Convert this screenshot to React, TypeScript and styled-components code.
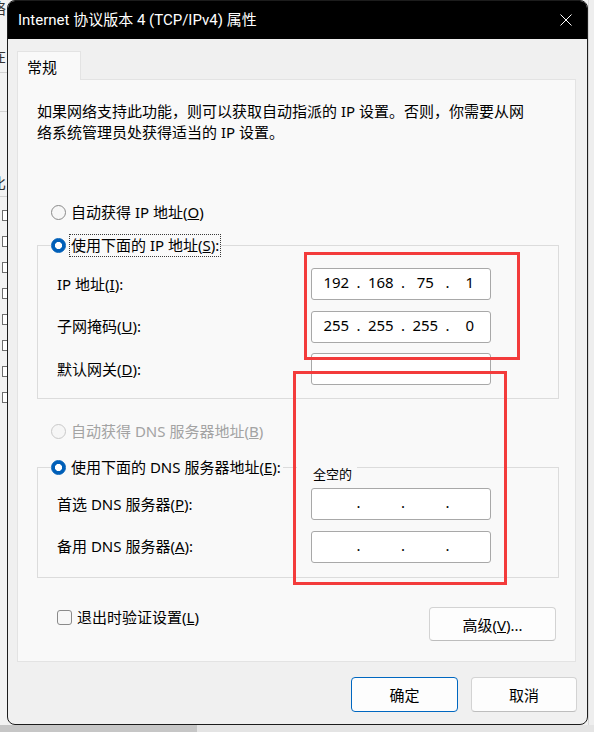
import React from "react";
import styled, { createGlobalStyle } from "styled-components";

const FONT = `"Noto Sans", "Noto Sans CJK SC", sans-serif`;
const TITLE_FONT = `Roboto, "Noto Sans CJK SC", sans-serif`;

const Global = createGlobalStyle`
  html, body { margin: 0; padding: 0; }
  body { width: 594px; height: 732px; overflow: hidden; background: #e6e6e6; }
`;

const Screen = styled.div`
  position: relative;
  width: 594px;
  height: 732px;
  display: grid;
  grid-template-columns: 7px 581px 6px;
  grid-template-rows: 725px 7px;
  font-family: ${FONT};
  background: #f0f0f0;
  overflow: hidden;
`;

const LeftStrip = styled.div`
  background: #f2f2f2;
  display: flex;
  flex-direction: column;
  align-items: flex-start;
  overflow: hidden;
`;

const FragText = styled.span<{ $top: number; $color?: string }>`
  display: block;
  width: 16px;
  margin: ${(p) => p.$top}px 0 0 -9px;
  font-family: "Noto Sans CJK SC", sans-serif;
  font-size: 15px;
  line-height: 20px;
  color: ${(p) => p.$color ?? "#333"};
  white-space: nowrap;
`;

const FragRule = styled.span<{ $top: number }>`
  display: block;
  width: 7px;
  height: 1px;
  margin-top: ${(p) => p.$top}px;
  background: #d2d2d2;
`;

const FragBoxes = styled.div`
  display: flex;
  flex-direction: column;
  gap: 15px;
  margin-top: 13px;
  padding-left: 2px;
`;

const Frag = styled.span`
  display: block;
  width: 5px;
  height: 11px;
  box-sizing: border-box;
  border: 1px solid #6e6e6e;
  border-right: none;
  background: #fff;
`;

const RightStrip = styled.div`
  background: #eeeeee;
  border-left: 1px solid #d6d6d6;
`;

const BottomStrip = styled.div`
  grid-column: 1 / 4;
  background: linear-gradient(to right, #c6c6c6 0 197px, #e4e4e4 197px);
`;

const Dialog = styled.div`
  display: flex;
  flex-direction: column;
  background: #f0f0f0;
  border: 1px solid #1c1c1c;
  border-radius: 8px;
  overflow: hidden;
`;

const TitleBar = styled.div`
  height: 38px;
  flex: none;
  background: #000;
  color: #fff;
  display: flex;
  align-items: center;
  justify-content: space-between;
  padding: 0 15px 0 10px;
  font-family: ${TITLE_FONT};
  font-size: 15px;
  line-height: 20px;
`;

const Body = styled.div`
  display: flex;
  flex-direction: column;
  padding: 12px 11px 0 9px;
`;

const TabStrip = styled.div`
  display: flex;
`;

const Tab = styled.div`
  height: 29px;
  box-sizing: border-box;
  padding: 0 23px 0 9px;
  display: flex;
  align-items: center;
  background: #f9f9f9;
  border: 1px solid #e3e3e3;
  border-bottom: none;
  margin-bottom: -1px;
  position: relative;
  z-index: 1;
  font-size: 15px;
  color: #000;
`;

const Panel = styled.div`
  height: 583px;
  box-sizing: border-box;
  background: #f9f9f9;
  border: 1px solid #e3e3e3;
  display: flex;
  flex-direction: column;
`;

const Desc = styled.div`
  margin: 21px 0 0 19px;
  font-size: 15px;
  line-height: 21px;
  color: #000;
`;

const DescLine = styled.div`
  white-space: nowrap;
`;

const OptionRow = styled.div<{ $top?: number; $left?: number }>`
  display: flex;
  align-items: center;
  height: 23px;
  margin-top: ${(p) => p.$top ?? 0}px;
  margin-left: ${(p) => p.$left ?? 0}px;
`;

const RadioDot = styled.span<{ $checked?: boolean; $disabled?: boolean }>`
  width: 15px;
  height: 15px;
  flex: none;
  box-sizing: border-box;
  border-radius: 50%;
  border: 1px solid
    ${(p) => (p.$disabled ? "#c9c9c9" : p.$checked ? "#005fb8" : "#8a8a8a")};
  background: ${(p) =>
    p.$checked
      ? "radial-gradient(circle, #fff 0 3.2px, #005fb8 3.9px)"
      : p.$disabled
      ? "#f6f6f6"
      : "#f7f7f7"};
`;

const OptionText = styled.span<{ $focus?: boolean; $disabled?: boolean }>`
  margin-left: 3px;
  padding: 0 1px;
  border: 1px dotted ${(p) => (p.$focus ? "#3a3a3a" : "transparent")};
  font-size: 15px;
  line-height: 21px;
  white-space: nowrap;
  color: ${(p) => (p.$disabled ? "#a3a3a3" : "#000")};
`;

const Group = styled.fieldset<{ $top: number; $bottom: number }>`
  margin: ${(p) => p.$top}px 16px 0 19px;
  padding: 0 0 ${(p) => p.$bottom}px 0;
  border: 1px solid #dcdcdc;
  min-width: 0;
`;

const Legend = styled.legend`
  margin-left: 13px;
  padding: 0;
`;

const FieldGrid = styled.div<{ $top: number }>`
  display: grid;
  grid-template-columns: 254px 180px;
  row-gap: 10.5px;
  align-items: center;
  padding: ${(p) => p.$top}px 0 0 19px;
`;

const FieldLabel = styled.span`
  font-size: 15px;
  line-height: 21px;
  color: #000;
  white-space: nowrap;
`;

const IpBox = styled.div`
  width: 180px;
  height: 32px;
  box-sizing: border-box;
  background: #fff;
  border: 1px solid #a8a8a8;
  border-radius: 3px;
  display: grid;
  grid-template-columns: 1fr 4px 1fr 4px 1fr 4px 1fr;
  padding-left: 4px;
  font-size: 15px;
  line-height: 26px;
  color: #000;
`;

const IpCell = styled.span`
  text-align: center;
`;

const IpDot = styled.span`
  display: flex;
  justify-content: center;
`;

const BottomRow = styled.div`
  margin: 29px 19px 0 39px;
  display: flex;
  align-items: flex-start;
  justify-content: space-between;
`;

const CheckLabel = styled.label`
  display: flex;
  align-items: center;
  gap: 5px;
  height: 21px;
  font-size: 15px;
  line-height: 21px;
  color: #000;
  white-space: nowrap;
`;

const CheckBox = styled.span`
  width: 15px;
  height: 15px;
  flex: none;
  box-sizing: border-box;
  border: 1px solid #8a8a8a;
  border-radius: 3px;
  background: #f7f7f7;
`;

const PushButton = styled.button<{ $primary?: boolean; $w: number; $h: number }>`
  width: ${(p) => p.$w}px;
  height: ${(p) => p.$h}px;
  box-sizing: border-box;
  padding: 0;
  background: #fdfdfd;
  border: 1px solid ${(p) => (p.$primary ? "#0067c0" : "#d3d3d3")};
  border-bottom-color: ${(p) => (p.$primary ? "#0067c0" : "#bdbdbd")};
  border-radius: 4px;
  font-family: ${FONT};
  font-size: 15px;
  color: #000;
`;

const Footer = styled.div`
  margin: 15px -1px 0 0;
  display: flex;
  justify-content: flex-end;
  gap: 13px;
`;

const RedFrame = styled.div<{ $l: number; $t: number; $w: number; $h: number }>`
  position: absolute;
  left: ${(p) => p.$l}px;
  top: ${(p) => p.$t}px;
  width: ${(p) => p.$w}px;
  height: ${(p) => p.$h}px;
  box-sizing: border-box;
  border: 3px solid #f33b3b;
  pointer-events: none;
`;

const Note = styled.div`
  position: absolute;
  left: 297px;
  top: 466px;
  padding: 0 5px 0 16px;
  background: #f9f9f9;
  font-family: "Noto Sans CJK SC", sans-serif;
  font-size: 13px;
  line-height: 15px;
  color: #000;
`;

const Ip: React.FC<{ parts?: string[] }> = ({ parts = ["", "", "", ""] }) => (
  <IpBox>
    <IpCell>{parts[0]}</IpCell>
    <IpDot>.</IpDot>
    <IpCell>{parts[1]}</IpCell>
    <IpDot>.</IpDot>
    <IpCell>{parts[2]}</IpCell>
    <IpDot>.</IpDot>
    <IpCell>{parts[3]}</IpCell>
  </IpBox>
);

const CloseIcon = () => (
  <svg width="12" height="12" viewBox="0 0 12 12">
    <path d="M0.5 0.5 L11.5 11.5 M11.5 0.5 L0.5 11.5" stroke="#fff" strokeWidth="1" fill="none" />
  </svg>
);

export default function App() {
  return (
    <>
      <Global />
      <Screen>
        <LeftStrip>
          <FragText $top={-2}>络</FragText>
          <FragText $top={28}>在</FragText>
          <FragRule $top={6} />
          <FragText $top={4} $color="#2a6fb8">I</FragText>
          <FragRule $top={14} />
          <FragText $top={61}>比</FragText>
          <FragRule $top={3} />
          <FragBoxes>
            {Array.from({ length: 8 }).map((_, i) => (
              <Frag key={i} />
            ))}
          </FragBoxes>
        </LeftStrip>
        <Dialog>
          <TitleBar>
            <span>Internet 协议版本 4 (TCP/IPv4) 属性</span>
            <CloseIcon />
          </TitleBar>
          <Body>
            <TabStrip>
              <Tab>常规</Tab>
            </TabStrip>
            <Panel>
              <Desc>
                <DescLine>如果网络支持此功能，则可以获取自动指派的 IP 设置。否则，你需要从网</DescLine>
                <DescLine>络系统管理员处获得适当的 IP 设置。</DescLine>
              </Desc>

              <OptionRow $top={57.5} $left={33}>
                <RadioDot />
                <OptionText>
                  自动获得 IP 地址(<u>O</u>)
                </OptionText>
              </OptionRow>

              <Group $top={10.5} $bottom={13}>
                <Legend>
                  <OptionRow>
                    <RadioDot $checked />
                    <OptionText $focus>
                      使用下面的 IP 地址(<u>S</u>):
                    </OptionText>
                  </OptionRow>
                </Legend>
                <FieldGrid $top={11}>
                  <FieldLabel>
                    IP 地址(<u>I</u>):
                  </FieldLabel>
                  <Ip parts={["192", "168", "75", "1"]} />
                  <FieldLabel>
                    子网掩码(<u>U</u>):
                  </FieldLabel>
                  <Ip parts={["255", "255", "255", "0"]} />
                  <FieldLabel>
                    默认网关(<u>D</u>):
                  </FieldLabel>
                  <Ip />
                </FieldGrid>
              </Group>

              <OptionRow $top={20.5} $left={33}>
                <RadioDot $disabled />
                <OptionText $disabled>
                  自动获得 DNS 服务器地址(<u>B</u>)
                </OptionText>
              </OptionRow>

              <Group $top={13} $bottom={14.5}>
                <Legend>
                  <OptionRow>
                    <RadioDot $checked />
                    <OptionText>
                      使用下面的 DNS 服务器地址(<u>E</u>):
                    </OptionText>
                  </OptionRow>
                </Legend>
                <FieldGrid $top={9.5}>
                  <FieldLabel>
                    首选 DNS 服务器(<u>P</u>):
                  </FieldLabel>
                  <Ip />
                  <FieldLabel>
                    备用 DNS 服务器(<u>A</u>):
                  </FieldLabel>
                  <Ip />
                </FieldGrid>
              </Group>

              <BottomRow>
                <CheckLabel>
                  <CheckBox />
                  <span>
                    退出时验证设置(<u>L</u>)
                  </span>
                </CheckLabel>
                <PushButton $w={127} $h={34}>
                  高级(<u>V</u>)...
                </PushButton>
              </BottomRow>
            </Panel>
            <Footer>
              <PushButton $primary $w={107} $h={35}>
                确定
              </PushButton>
              <PushButton $w={106} $h={35}>
                取消
              </PushButton>
            </Footer>
          </Body>
        </Dialog>
        <RightStrip />
        <BottomStrip />
        <RedFrame $l={304} $t={252} $w={216} $h={108} />
        <RedFrame $l={293} $t={371} $w={214} $h={214} />
        <Note>全空的</Note>
      </Screen>
    </>
  );
}
